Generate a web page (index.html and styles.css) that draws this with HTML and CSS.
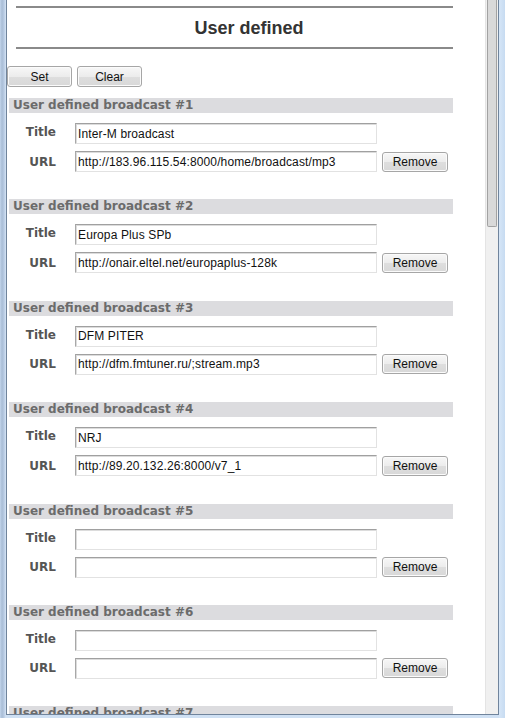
FILE: index.html
```html
<!DOCTYPE html>
<html>
<head>
<meta charset="utf-8">
<link rel="stylesheet" href="styles.css">
</head>
<body>
<div class="frame">
  <div class="viewport">
    <div class="content">
      <hr class="rule rule-top">
      <h1 class="heading">User defined</h1>
      <hr class="rule rule-bottom">
      <div class="actions">
        <button class="btn btn-main">Set</button>
        <button class="btn btn-main">Clear</button>
      </div>

      <div class="section">
        <div class="section-bar">User defined broadcast #1</div>
        <div class="row row-title"><span class="label label-title">Title</span><input class="field" value="Inter-M broadcast"></div>
        <div class="row"><span class="label">URL</span><input class="field" value="http://183.96.115.54:8000/home/broadcast/mp3"><button class="btn btn-remove">Remove</button></div>
      </div>

      <div class="section">
        <div class="section-bar">User defined broadcast #2</div>
        <div class="row row-title"><span class="label label-title">Title</span><input class="field" value="Europa Plus SPb"></div>
        <div class="row"><span class="label">URL</span><input class="field" value="http://onair.eltel.net/europaplus-128k"><button class="btn btn-remove">Remove</button></div>
      </div>

      <div class="section">
        <div class="section-bar">User defined broadcast #3</div>
        <div class="row row-title"><span class="label label-title">Title</span><input class="field" value="DFM PITER"></div>
        <div class="row"><span class="label">URL</span><input class="field" value="http://dfm.fmtuner.ru/;stream.mp3"><button class="btn btn-remove">Remove</button></div>
      </div>

      <div class="section">
        <div class="section-bar">User defined broadcast #4</div>
        <div class="row row-title"><span class="label label-title">Title</span><input class="field" value="NRJ"></div>
        <div class="row"><span class="label">URL</span><input class="field" value="http://89.20.132.26:8000/v7_1"><button class="btn btn-remove">Remove</button></div>
      </div>

      <div class="section">
        <div class="section-bar">User defined broadcast #5</div>
        <div class="row row-title"><span class="label label-title">Title</span><input class="field" value=""></div>
        <div class="row"><span class="label">URL</span><input class="field" value=""><button class="btn btn-remove">Remove</button></div>
      </div>

      <div class="section">
        <div class="section-bar">User defined broadcast #6</div>
        <div class="row row-title"><span class="label label-title">Title</span><input class="field" value=""></div>
        <div class="row"><span class="label">URL</span><input class="field" value=""><button class="btn btn-remove">Remove</button></div>
      </div>

      <div class="section">
        <div class="section-bar">User defined broadcast #7</div>
        <div class="row row-title"><span class="label label-title">Title</span><input class="field" value=""></div>
        <div class="row"><span class="label">URL</span><input class="field" value=""><button class="btn btn-remove">Remove</button></div>
      </div>
    </div>
    <div class="scrollbar"><div class="thumb"></div></div>
  </div>
</div>
</body>
</html>
```

FILE: styles.css
```css
html, body {
  margin: 0;
  padding: 0;
}

body {
  font-family: "Liberation Sans", Arial, sans-serif;
  background: #cfe0f3;
}

.frame {
  width: 505px;
  height: 718px;
  box-sizing: border-box;
  display: flex;
  padding: 0 6px 3px 6px;
  background:
    linear-gradient(to right, #c3d6ec 0, #a9bdd6 2px, #b8cbe3 4px, #d5e4f5 6px, transparent 6px),
    linear-gradient(to left, #c7dbf1 0, #d6e6f7 6px, transparent 6px),
    #cfe0f3;
}

.viewport {
  flex: 1;
  display: flex;
  background: #fff;
  border-left: 1px solid #70849c;
  border-right: 1px solid #70849c;
  border-bottom: 1px solid #70849c;
  overflow: hidden;
}

.content {
  flex: 1;
  display: flex;
  flex-direction: column;
  overflow: hidden;
}

.rule {
  border: 0;
  height: 2px;
  background: #8a8a8a;
  margin: 0 32px 0 9px;
  flex: none;
}

.rule-top {
  margin-top: 6px;
}

.heading {
  margin: 9px 0 8px 6px;
  font-size: 18px;
  line-height: 22px;
  font-weight: bold;
  color: #333;
  text-align: center;
  flex: none;
}

.actions {
  display: flex;
  gap: 5px;
  margin-top: 17px;
  flex: none;
}

.btn {
  font-family: "Liberation Sans", Arial, sans-serif;
  font-size: 12px;
  color: #111;
  height: 21px;
  padding: 0;
  border: 1px solid #a6a6a6;
  border-radius: 3px;
  background: linear-gradient(to bottom, #f7f7f7 0%, #ececec 50%, #dedede 51%, #d8d8d8 100%);
  box-shadow: inset 0 0 0 1px #fbfbfb;
}

.btn-main {
  width: 65px;
}

.btn-remove {
  width: 66px;
  height: 20px;
  margin-left: 5px;
}

.section {
  margin-top: 11px;
  margin-bottom: 16.4px;
  flex: none;
}

.section-bar {
  margin: 0 32px 0 2px;
  height: 15px;
  line-height: 15px;
  background: #dcdcdf;
  padding-left: 4px;
  font-family: "DejaVu Sans", Verdana, sans-serif;
  font-size: 12px;
  font-weight: bold;
  color: #6b6b6b;
  white-space: nowrap;
}

.row {
  display: flex;
  align-items: center;
  height: 21px;
  margin-top: 7px;
}

.row-title {
  margin-top: 10px;
}

.label {
  width: 49px;
  text-align: right;
  margin-right: 19px;
  font-family: "DejaVu Sans", Verdana, sans-serif;
  font-size: 12px;
  font-weight: bold;
  color: #555;
}

.label-title {
  margin-bottom: 3px;
}

.field {
  width: 302px;
  height: 21px;
  box-sizing: border-box;
  margin: 0;
  padding: 0 2px;
  border: 1px solid;
  border-color: #a0a0a0 #e2e2e2 #e2e2e2 #a8a8a8;
  box-shadow: inset 1px 1px 0 #dcdcdc;
  font-family: "Liberation Sans", Arial, sans-serif;
  font-size: 12px;
  letter-spacing: 0.13px;
  color: #111;
  outline: none;
}

.scrollbar {
  width: 12px;
  flex: none;
  background: #f0f0f0;
  border-left: 1px solid #e4e4e4;
}

.thumb {
  margin-left: 1px;
  width: 8px;
  height: 226px;
  background: #d9d9d9;
  border: 1px solid #a2a2a2;
  border-top: 0;
  border-radius: 0 0 2px 2px;
}
```
